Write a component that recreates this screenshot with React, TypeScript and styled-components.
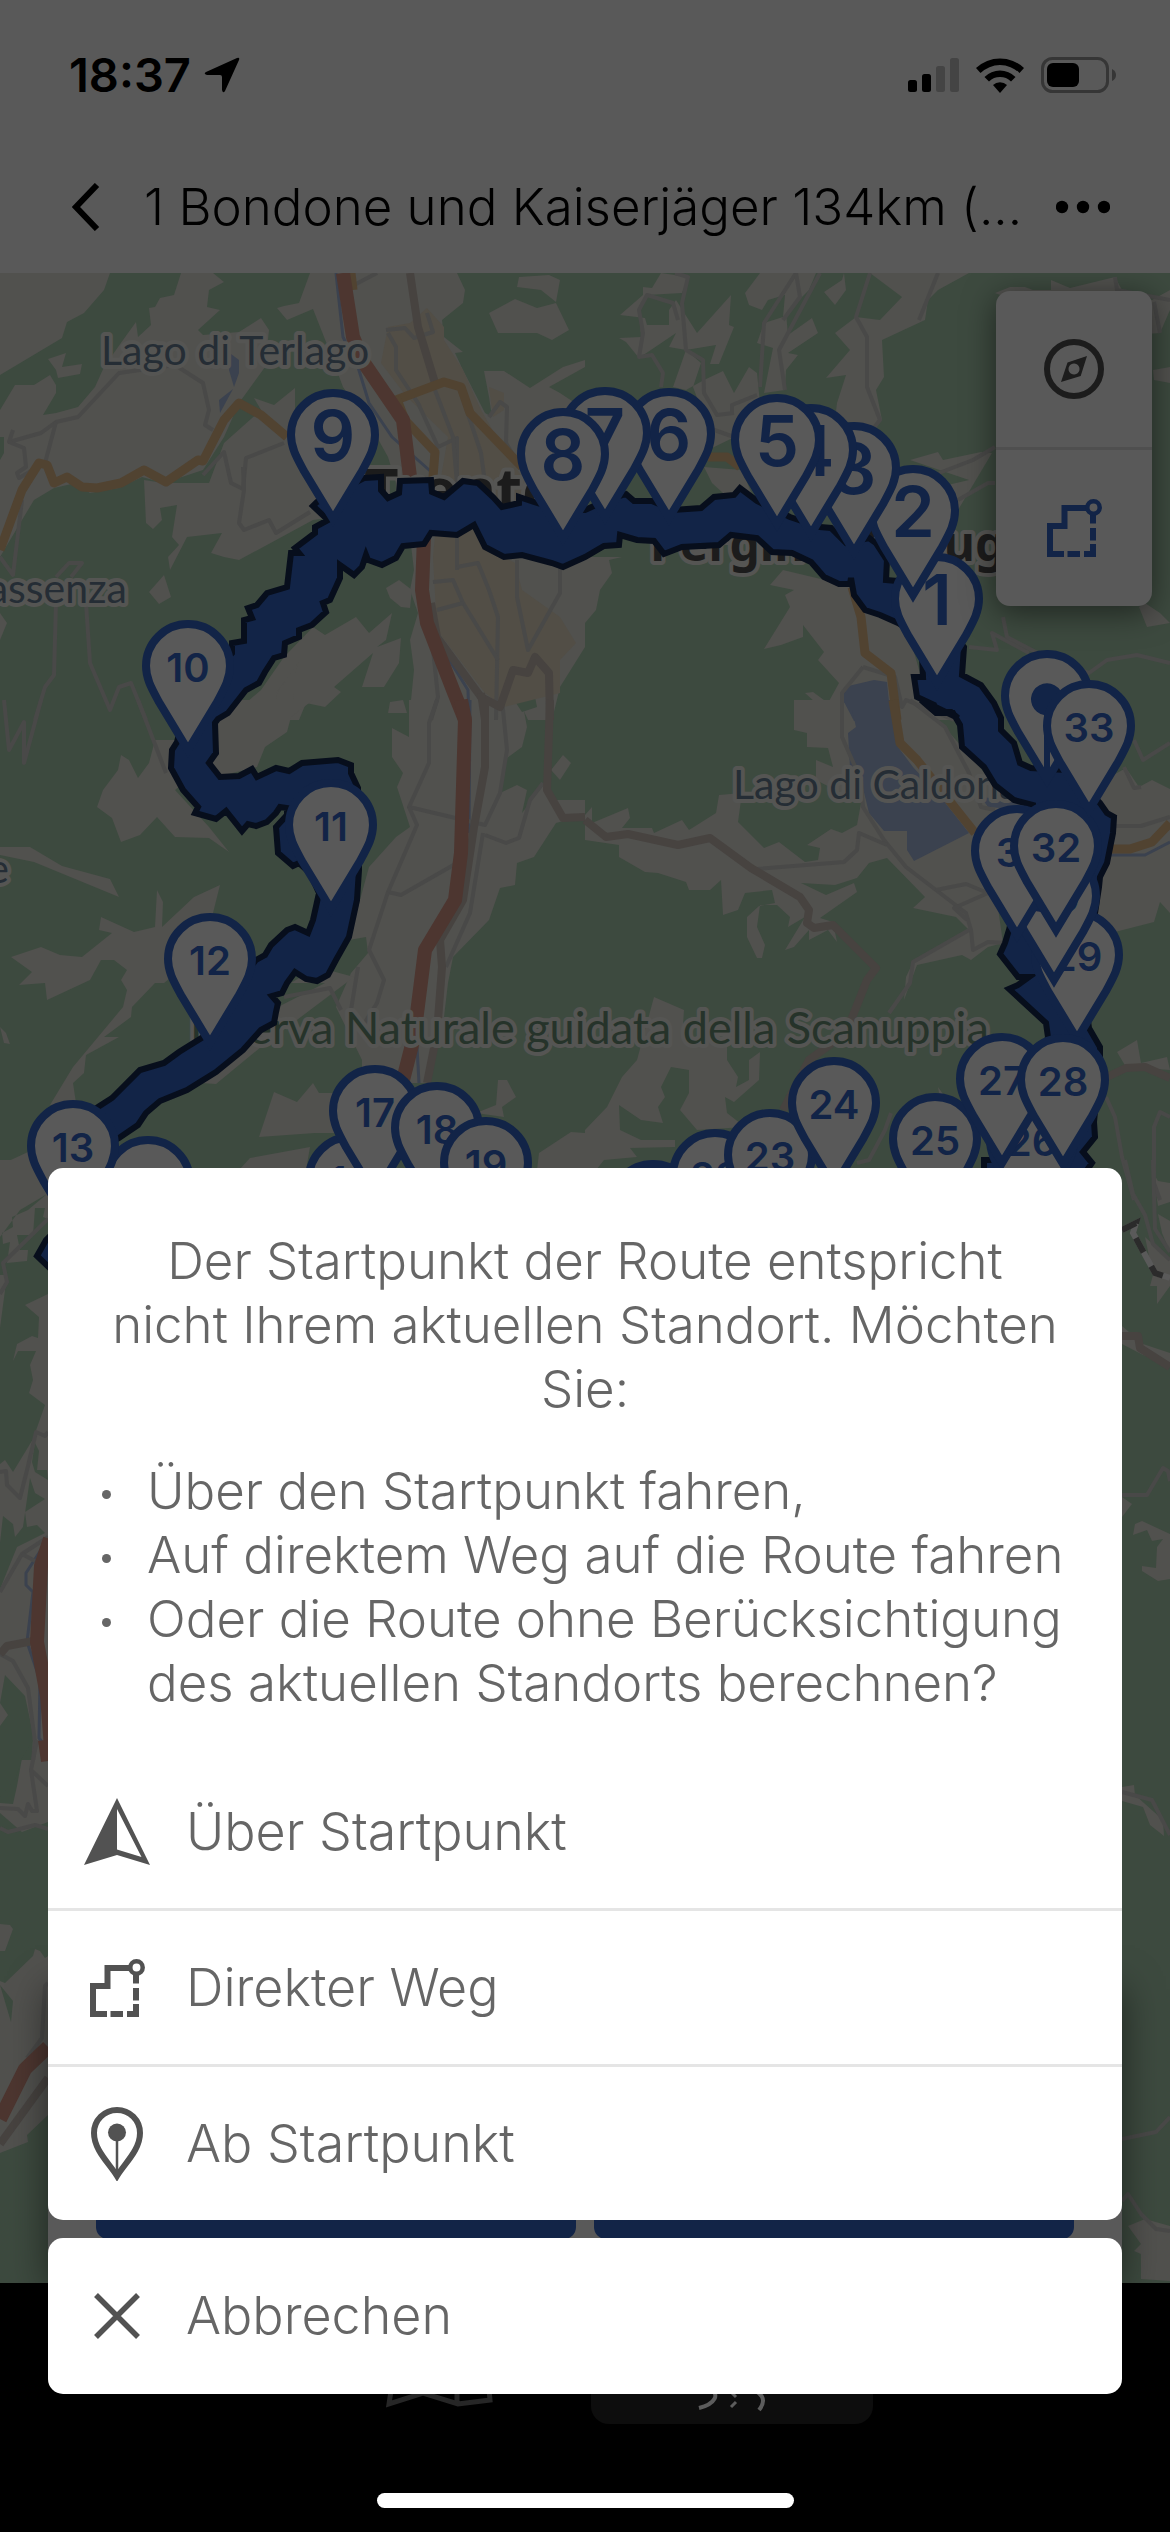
import React from "react";
import styled, { createGlobalStyle } from "styled-components";

const color = {
  chrome: "#595959",
  land: "#51514e",
  forest: "#3d4a3f",
  town: "#524e46",
  water: "#3b424f",
  motorway: "#4d3630",
  primary: "#514331",
  secondary: "#474340",
  minor: "#494948",
  route: "#122447",
  routeEdge: "#070e1c",
  lakeLabel: "#252d35",
  parkLabel: "#26332a",
  cityLabel: "#1c1c1c",
  halo: "#555553",
  text: "#666666",
  icon: "#525252",
  line: "#e5e5e5",
};

const GlobalStyle = createGlobalStyle`
  *, *::before, *::after { box-sizing: border-box; }
  body {
    margin: 0;
    background: #000;
    font-family: Inter, "Liberation Sans", sans-serif;
  }
  button { font: inherit; }
`;

const Screen = styled.div`
  position: relative;
  display: flex;
  flex-direction: column;
  min-height: 100vh;
  overflow: hidden;
`;

const StatusBar = styled.div`
  display: flex;
  align-items: center;
  justify-content: space-between;
  height: 140px;
  padding: 10px 54px 0 69px;
  background: ${color.chrome};
  color: #000;
`;

const Clock = styled.div`
  display: flex;
  align-items: center;
  gap: 13px;
  font-size: 47px;
  line-height: 56px;
  font-weight: 600;
`;

const StatusIcons = styled.div`
  display: flex;
  align-items: center;
  gap: 17px;
`;

const Header = styled.header`
  display: flex;
  align-items: center;
  height: 133px;
  padding: 0 48px 0 60px;
  background: ${color.chrome};
`;

const HeaderButton = styled.button`
  display: flex;
  align-items: center;
  justify-content: center;
  flex: none;
  height: 90px;
  padding: 0 12px;
  border: 0;
  background: none;
  color: #000;
`;

const Title = styled.h1`
  flex: 1;
  min-width: 0;
  margin: 0;
  padding: 0 20px 0 32px;
  overflow: hidden;
  white-space: nowrap;
  font-size: 51px;
  line-height: 64px;
  font-weight: 300;
  color: #000;
`;

const MapArea = styled.main`
  position: relative;
  flex: 1;
  display: flex;
  flex-direction: column;
  justify-content: space-between;
  overflow: hidden;
  background: ${color.forest};
`;

const MapCanvas = styled.svg`
  position: absolute;
  inset: 0;
  width: 100%;
  height: 100%;
`;

const MapControls = styled.div`
  position: relative;
  display: flex;
  flex-direction: column;
  align-self: flex-end;
  width: 156px;
  margin: 18px 18px 0 0;
  border-radius: 14px;
  background: ${color.chrome};
  box-shadow: 0 6px 32px rgba(0, 0, 0, 0.5);
`;

const MapControl = styled.button<{ $tint: string }>`
  display: flex;
  align-items: center;
  justify-content: center;
  height: 156px;
  padding: 0;
  border: 0;
  background: none;
  color: ${(p) => p.$tint};

  & + & {
    height: 159px;
    border-top: 3px solid #4f4f4f;
  }
`;

const RouteCard = styled.div`
  position: relative;
  display: grid;
  grid-template-columns: 1fr 1fr;
  align-items: end;
  gap: 18px;
  height: 300px;
  margin: 0 48px;
  padding: 0 48px 44px;
  background: ${color.chrome};
  box-shadow: 0 6px 36px rgba(0, 0, 0, 0.5);
`;

const CardButton = styled.button`
  height: 126px;
  border: 0;
  border-radius: 12px;
  background: ${color.route};
`;

const TabBar = styled.nav`
  display: flex;
  justify-content: center;
  gap: 12px;
  height: 249px;
  padding-top: 18px;
  background: #000;
`;

const Tab = styled.button<{ $active?: boolean }>`
  display: flex;
  align-items: flex-end;
  justify-content: center;
  width: 282px;
  height: 123px;
  padding: 0 0 ${(p) => (p.$active ? 8 : 16)}px;
  border: 0;
  border-radius: 18px;
  background: ${(p) => (p.$active ? "#0d0d0d" : "none")};
  color: ${(p) => (p.$active ? "#5c5c5c" : "#262626")};
`;

const Overlay = styled.div`
  position: absolute;
  inset: 0;
  display: flex;
  flex-direction: column;
  justify-content: flex-end;
  gap: 18px;
  padding: 0 48px 24px;
`;

const Sheet = styled.section`
  overflow: hidden;
  border-radius: 15px;
  background: #fff;
`;

const Message = styled.div`
  padding: 61px 54px 40px;
  font-size: 51px;
  line-height: 64px;
  font-weight: 300;
  color: ${color.text};
`;

const Question = styled.p`
  margin: 0 0 38px;
  padding: 0 9px;
  text-align: center;
`;

const Options = styled.ul`
  margin: 0;
  padding: 0;
  list-style: none;
`;

const Option = styled.li`
  display: flex;
  gap: 36px;

  &::before {
    content: "";
    flex: none;
    width: 9px;
    height: 9px;
    margin-top: 31px;
    border-radius: 50%;
    background: ${color.text};
  }
`;

const Action = styled.button`
  display: flex;
  align-items: center;
  gap: 36px;
  width: 100%;
  height: 156px;
  padding: 0 36px;
  border: 0;
  background: none;
  text-align: left;
  font-size: 52px;
  line-height: 64px;
  font-weight: 300;
  color: ${color.text};

  &:not(:last-child) {
    border-bottom: 3px solid ${color.line};
  }

  &:last-child:not(:only-child) {
    height: 153px;
  }
`;

const ActionIcon = styled.span`
  display: flex;
  align-items: center;
  justify-content: center;
  flex: none;
  width: 66px;
  color: ${color.icon};
`;

const HomeIndicator = styled.div`
  flex: none;
  align-self: center;
  width: 417px;
  height: 15px;
  margin-top: 81px;
  border-radius: 8px;
  background: #fff;
`;

/* ---------- icons ---------- */

const LocationArrow = () => (
  <svg width="36" height="36" viewBox="0 0 36 36" aria-hidden="true">
    <path d="M33 1 Q36 0 35 3 L21 34 Q19 37 18 33 V20 Q18 18 16 18 H3 Q-1 17 2 15Z" fill="currentColor" />
  </svg>
);

const Signal = () => (
  <svg width="51" height="34" viewBox="0 0 51 34" aria-hidden="true">
    <rect x="0" y="22" width="9" height="12" rx="2.5" />
    <rect x="14" y="16" width="9" height="18" rx="2.5" />
    <rect x="28" y="8" width="9" height="26" rx="2.5" fill="#444" />
    <rect x="42" y="0" width="9" height="34" rx="2.5" fill="#444" />
  </svg>
);

const Wifi = () => (
  <svg width="48" height="36" viewBox="0 0 48 36" aria-hidden="true">
    <path d="M0 11 A35 35 0 0 1 48 11 L43.500 16 A28 28 0 0 0 4.500 16Z" />
    <path d="M8.500 20 A22 22 0 0 1 39.500 20 L35 24.500 A16 16 0 0 0 13 24.500Z" />
    <path d="M17 28 A10 10 0 0 1 31 28 L24 36Z" />
  </svg>
);

const Battery = () => (
  <svg width="75" height="36" viewBox="0 0 75 36" aria-hidden="true">
    <rect x="1.500" y="1.500" width="65" height="33" rx="10" fill="none" stroke="#363636" strokeWidth="3" />
    <rect x="6" y="6" width="32" height="24" rx="6" />
    <path d="M71 12 Q75 14 75 18 T71 24Z" fill="#363636" />
  </svg>
);

const Chevron = () => (
  <svg width="28" height="48" viewBox="0 0 28 48" aria-hidden="true">
    <path d="M25 2 L4 24 L25 46" fill="none" stroke="currentColor" strokeWidth="6" />
  </svg>
);

const Dots = () => (
  <svg width="54" height="14" viewBox="0 0 54 14" aria-hidden="true">
    {[6, 27, 48].map((x) => (
      <circle key={x} cx={x} cy="7" r="6.200" fill="currentColor" />
    ))}
  </svg>
);

const Compass = () => (
  <svg width="60" height="60" viewBox="0 0 60 60" aria-hidden="true">
    <circle cx="30" cy="30" r="27" fill="none" stroke="currentColor" strokeWidth="6" />
    <path
      fillRule="evenodd"
      fill="currentColor"
      d="M43 17 L36.700 37 L17 43 L23.500 23.500Z M30 24.500 a5.500 5.500 0 1 0 0.010 0Z"
    />
  </svg>
);

const RouteIcon = () => (
  <svg width="55" height="58" viewBox="0 0 55 58" fill="none" stroke="currentColor" strokeWidth="6" aria-hidden="true">
    <path d="M39 9 H17.500 V27 H3 V55 H17 M20.500 55 H33 M37 55 H46 V45 M46 41.500 V29 M46 24.500 V16" />
    <circle cx="46.500" cy="8.500" r="6.200" strokeWidth="4.500" />
  </svg>
);

const NavArrow = () => (
  <svg width="66" height="67" viewBox="0 0 66 67" aria-hidden="true">
    <path fillRule="evenodd" fill="currentColor" d="M33 0 L66 67 L33 57 L0 67Z M33 11 V51.500 L57.500 59Z" />
  </svg>
);

const StartPin = () => (
  <svg width="52" height="74" viewBox="0 0 52 74" aria-hidden="true">
    <path
      d="M26 69 C18 56 3 43 3 26 A23 23 0 0 1 49 26 C49 43 34 56 26 69Z"
      fill="none"
      stroke="currentColor"
      strokeWidth="6"
    />
    <circle cx="26" cy="25.500" r="9" fill="currentColor" />
    <path d="M26 30 V66" stroke="currentColor" strokeWidth="2.500" />
  </svg>
);

const Cross = () => (
  <svg width="46" height="46" viewBox="0 0 46 46" aria-hidden="true">
    <path d="M2 2 L44 44 M44 2 L2 44" stroke="currentColor" strokeWidth="5.500" />
  </svg>
);

const FoldedMap = () => (
  <svg width="110" height="84" viewBox="0 0 110 84" fill="none" stroke="currentColor" strokeWidth="5" aria-hidden="true">
    <path d="M6 80 L16 14 L42 4 L74 14 L100 4 L107 76 L75 80 L40 69Z M42 4 L40 69 M74 14 V80" />
  </svg>
);

const Bends = () => (
  <svg width="70" height="84" viewBox="0 0 70 84" fill="none" stroke="currentColor" strokeWidth="4" aria-hidden="true">
    <path d="M2 76 C18 72 24 62 12 56 M50 56 C66 60 70 68 62 78" />
    <path d="M34 60 L39 65 M39 70 L34 75" strokeWidth="3" />
  </svg>
);

/* ---------- map data ---------- */

/* Each survey sheet has its own origin and scale; points are placed on the common grid. */
const sheet = (ox: number, oy: number, sx: number, sy: number) => (points: string) =>
  points
    .trim()
    .split(/\s+/)
    .map((p) => {
      const [x, y] = p.split(",").map(Number);
      return `${Math.round(ox + x / sx)},${Math.round(oy + y / sy)}`;
    })
    .join(" ");

const NW = sheet(0, 270, 2.68, 3);
const NE = sheet(585, 270, 2.68, 3);
const SW = sheet(0, 700, 2.68, 3);
const SE = sheet(585, 700, 2.68, 3);
const W1 = sheet(0, 1160, 3, 2.613);
const W2 = sheet(0, 1740, 3, 2.8);
const E1 = sheet(1100, 1160, 3, 2.613);
const E2 = sheet(585, 1750, 2.68, 2.005);

const openLand = [
  NW("0,10 295,10 280,60 225,130 180,155 165,205 0,315"),
  NW("485,10 570,10 600,35 560,60 555,110 590,120 530,180 545,195 640,185 700,145 720,180 710,290 640,400 600,500 545,600 440,640 380,620 320,655 240,670 205,640 145,655 90,690 60,750 0,860 0,570 12,550 10,500 0,500 0,420 40,345 90,345 135,315 150,345 150,370 115,435 150,430 210,410 255,350 280,290 330,210 365,155 370,200 405,165 400,115 415,110 430,85 465,75"),
  NW("128,268 178,250 165,290 220,283 215,312 155,325 150,300"),
  NW("790,355 735,405 680,385 700,420 600,520 560,640 440,640 385,630 390,760 410,777 435,750 430,715 475,705 460,800 480,825 450,860 455,900 500,800 595,790 565,850 600,860 640,870 840,750 880,745 850,640 790,560"),
  NW("830,10 800,100 760,108 742,115 770,150 840,118 880,230 920,350 1000,480 1040,560 1060,640 1100,800 1110,900 1100,960 1120,1030 1100,1110 1110,1200 1095,1350 1395,1350 1400,1310 1415,1350 1480,1350 1500,1250 1568,1130 1568,450 1540,400 1500,370 1470,350 1568,290 1568,270 1510,290 1420,355 1350,303 1298,303 1310,380 1318,440 1300,430 1240,300 1220,250 1240,245 1190,200 1185,150 1240,100 1245,60 1225,10"),
  NW("1390,20 1470,15 1500,30 1490,95 1450,60 1385,50"),
  NW("1310,130 1380,88 1440,115 1490,100 1525,180 1480,210 1440,190 1335,190"),
  NW("440,915 458,980 425,1003 398,965"),
  NW("1035,955 1070,930 1105,960 1100,1015 1075,1010 1045,985"),
  NW("955,1040 990,1090 1050,1030 1035,1110 1010,1130 1075,1105 1070,1180 1030,1250 970,1250 1000,1150 895,1250 915,1265 870,1310 820,1300 800,1350 605,1350 700,1260 760,1160 840,1070 870,1095"),
  NW("800,1175 790,1210 750,1250 740,1280 765,1335 790,1320 785,1270 740,1270"),
  NW("0,1030 20,1060 0,1110"),
  SW("570,60 640,0 840,0 780,50 770,95 710,140 690,200 580,230 560,150"),
  SW("1040,40 1045,5 1080,0 1090,40"),
  SW("325,165 345,180 370,235 400,190 415,120 470,120 500,240 470,270 560,380 615,455 560,415 470,410 420,350 375,405 325,425 300,355 260,320 275,270 315,210"),
  SW("0,440 80,442 165,498 295,538 318,590 90,485 0,465"),
  SW("420,570 437,605 435,680 520,590 590,555 570,640 600,720 540,760 440,850 415,850 355,920 350,950 280,1010 320,1010 230,1065 225,1120 195,1150 205,1210 135,1215 195,1100 330,920 340,870 325,840 340,810 305,780 270,780 240,840 125,900 120,850 50,855 85,815 30,770 110,740 160,765 220,770 300,700 265,690 270,650 360,695 415,680"),
  SW("1050,85 1095,110 1095,0 1400,0 1412,80 1400,140 1360,175 1340,280 1385,255 1412,270 1400,340 1460,250 1480,300 1568,300 1568,345 1490,370 1430,470 1385,490 1380,555 1340,565 1310,660 1215,770 1200,850 1190,950 1150,1150 970,1150 970,1080 900,920 940,820 985,760 980,712 935,720 990,500 1060,410 1100,380 1065,260 1080,220 1050,170"),
  SW("1510,165 1530,190 1500,240 1478,210"),
  SW("735,1175 795,1205 840,1150 855,1180 900,1180 910,1300 845,1300 695,1310"),
  SW("0,1395 75,1355 130,1500 0,1500"),
  SW("1335,1140 1360,1140 1382,1190 1345,1220 1350,1250 1275,1240 1330,1215"),
  SW("830,1340 820,1410 640,1410 670,1375"),
  SW("1445,1360 1530,1295 1568,1300 1568,1410 1440,1410"),
  SW("745,920 870,850 780,850 850,800 950,830 700,1040 580,1152 540,1150"),
  SW("0,980 15,1000 28,1032 10,1030"),
  NE("0,860 100,862 65,870 72,910 40,960 30,1020 0,1060"),
  NE("205,10 180,55 155,52 155,75 95,135 160,145 165,165 225,165 225,120 245,90 300,190 390,75 385,165 400,170 360,282 335,282 350,225 270,240 235,350 270,360 320,330 370,303 400,370 440,290 460,310 470,400 440,480 330,540 330,470 290,350 310,280 270,240 225,230 245,190 145,265 110,215 90,205 150,200 145,120 165,75 260,70 275,20"),
  NE("470,10 430,70 440,105 475,120 490,90 535,75 530,140 480,160 460,220 505,235 495,280 480,370 535,360 540,300 572,255 545,250 625,190 608,145 545,195 540,130 600,60 620,10"),
  NE("765,10 850,80 790,150 725,140 670,190 710,240 645,325 700,315 675,400 670,450 730,460 770,470 795,450 780,360 800,320 795,210 910,150 920,90 945,60 1028,10"),
  NE("690,30 640,65 670,105 700,60 695,10"),
  NE("870,570 945,545 960,570 1060,545 1090,550 1000,720 950,650 1030,630"),
  NE("1100,70 1140,50 1180,50 1200,60 1250,60 1250,30 1300,55 1420,20 1440,60 1520,90 1568,60 1568,120 1540,190 1400,200"),
  NE("1485,1010 1505,1070 1568,1060 1540,1030 1500,1000"),
  NE("1522,300 1568,290 1568,340 1525,330"),
  NE("495,945 530,900 700,945 720,960 800,1040 860,1060 900,1220 940,1330 1010,1350 560,1350 560,1320 640,1320 590,1270 610,1265 650,1300 680,1240 625,1170 640,1145 585,1065 585,1100 525,1125 480,1137 550,1010 535,975 560,960"),
  NE("320,590 420,600 450,680 370,670 340,640"),
  SE("560,0 900,0 1010,140 1100,255 1180,320 1100,560 1120,730 1080,740 1035,780 1010,765 890,795 855,900 860,830 880,785 1030,690 995,650 880,625 910,590 810,475 760,490 730,535 670,555 580,550 645,585 720,550 728,575 630,655 665,665 675,725 650,690 600,720 600,690 560,740 535,750 590,650 545,680 550,650 515,615 470,615 460,680 482,735 475,775 460,775 435,710 435,650 465,618 510,610 500,570 430,580 410,630 370,645 365,540 335,570 280,570 270,545 195,520 160,515 90,470 90,435 0,420 0,345 20,320 20,370 115,325 120,355 100,385 180,385 185,400 260,360 280,390 350,340 360,285 420,280 410,365 480,445 520,425 590,485 625,480 630,445 595,435 660,388 690,400 730,375 740,310 620,240 620,180 665,200 650,145 595,140 595,100 560,90"),
  SE("1360,260 1450,205 1485,260 1520,240 1568,268 1568,640 1540,605 1525,665 1410,700 1360,650"),
  SE("185,890 265,930 260,1020 380,1010 380,1080 410,1130 405,1160 440,1140 440,1080 470,1055 465,1140 400,1205 375,1190 380,1240 430,1280 300,1290 255,1230 280,1180 280,1110 230,1100 205,1160 215,1190 195,1220 210,1270 150,1260 90,1215 95,1290 150,1320 240,1320 240,1340 120,1345 140,1370 50,1380 30,1410 0,1410 0,1290 60,1220 100,1130 140,1080"),
  SE("1425,1055 1480,1020 1490,1090 1560,1070 1568,1110 1450,1100"),
  SE("945,1160 965,1190 950,1180"),
  W1("0,0 95,0 144,90 144,1568 0,1568"),
  W2("115,0 65,50 50,130 40,180 0,175 0,205 65,257 144,230 144,0"),
  W2("0,515 30,517 38,530 15,592 0,590"),
  W2("105,585 120,590 135,610 144,605 144,1050 80,1105 85,1125 0,1155 0,675 15,680 100,605"),
  E1("155,30 175,55 210,60 210,110 175,120 165,70"),
  E1("175,140 210,160 210,240 185,190"),
  E1("135,200 210,260 210,330 172,375 170,330 150,330 160,300"),
  E1("66,435 130,480 210,505 210,530 130,510 66,480"),
  E1("100,980 105,950 125,943 210,978 210,1095 175,1100 125,1075 125,1060 168,1065 170,1010 190,990 155,995 140,968"),
  E1("66,880 95,900 66,932"),
  E2("1440,75 1470,70 1475,90 1550,140 1552,172 1515,150 1495,115 1440,102"),
  E2("1455,955 1500,940 1568,955 1568,1065 1490,1060 1490,1010 1470,1005 1490,990"),
];

const woods = [
  NW("1380,1270 1410,1255 1435,1280 1440,1310 1400,1325 1382,1300"),
  W1("140,90 85,130 35,150 40,175 5,190 10,220 30,215 20,270 80,265 85,235 60,235 50,195 100,195 105,125 135,125 130,150 144,155 144,350 75,380 117,410 115,465 97,460 50,480 40,525 55,500 108,500 90,535 100,575 88,610 135,640 100,730 40,815 15,785 0,795 0,440 20,300 0,300 0,200 60,130"),
  W1("90,830 105,870 135,885 75,920 80,960 110,955 135,975 75,1000 50,1010 0,1120 0,1000 10,930 40,950 45,985 70,960"),
  W1("105,740 118,760 110,810 140,810 144,835 105,815 95,790"),
  W1("15,1345 75,1400 100,1500 95,1568 0,1568 0,1480 25,1450 0,1420"),
  W2("0,0 100,0 65,50 45,110 0,160"),
  W2("0,685 38,730 33,790"),
];

const towns = [
  NW("1145,115 1190,170 1190,210 1240,300 1290,420 1340,520 1400,620 1430,700 1330,720 1300,830 1380,880 1400,960 1500,1040 1545,1120 1500,1170 1500,1270 1350,1310 1300,1270 1170,1080 1160,860 1180,640 1200,500 1090,380 1020,280 1040,170 1100,160"),
  NW("1310,350 1350,370 1350,420 1320,440"),
];

const lakes = [
  NW("618,252 640,270 641,310 628,352 615,300"),
  NW("588,390 625,358 590,430"),
  NE("695,1250 775,1230 810,1235 820,1352 720,1352 692,1290"),
  SE("690,0 715,30 725,80 705,100 710,200 740,240 760,340 800,392 862,392 862,450 882,483 1030,400 960,300 880,200 840,140 820,0"),
  SE("1060,290 1200,310 1180,330 1080,320"),
];

type Line = { points: string; kind: keyof typeof roadStyle };

const roadStyle = {
  stream: { stroke: color.water, width: 3 },
  minor: { stroke: color.minor, width: 4 },
  secondary: { stroke: color.secondary, width: 8 },
  primary: { stroke: color.primary, width: 9 },
  motorway: { stroke: color.motorway, width: 14 },
};

const lines: Line[] = [
  ...[
    NW("900,10 920,200 960,290 990,400 1050,500 1170,620"),
    NW("1165,1100 1255,1260 1258,1350"),
    SW("1260,0 1258,400"),
    SW("1118,1040 1122,1150"),
    SE("1405,466 1500,466 1568,425"),
    W1("144,990 78,1080 78,1110 98,1130 80,1260 120,1360 118,1510 140,1540"),
  ].map((points) => ({ points, kind: "stream" as const })),
  ...[
    NW("35,480 25,515 110,490 150,455 210,440 320,310 470,285 545,340 560,420 550,465 570,480"),
    NW("25,515 65,535 70,590 45,610 50,625 120,580 150,455"),
    NW("545,615 600,545 620,640 650,658 660,565 760,520"),
    NW("650,590 655,660 640,760 655,780 720,750 740,790 830,725"),
    NW("0,860 35,915 60,690"),
    NW("150,1000 145,1215 120,1250 95,1350"),
    NW("230,1000 240,1180 295,1320 320,1250 350,1240 390,1350"),
    NW("150,920 185,880 220,880 190,920"),
    NW("1035,180 1085,175 1110,205 1160,185 1145,130"),
    NW("1040,190 1060,230 1060,300 1120,400 1175,530 1225,505 1225,900"),
    NW("1165,360 1215,500 1225,640"),
    NW("1230,350 1290,550 1300,640"),
    NW("1310,440 1340,395 1358,410 1355,520 1400,600"),
    NW("1225,890 1280,880 1310,960 1335,1040 1330,1350"),
    NW("1160,935 1215,930 1240,1000 1335,1170"),
    NW("1170,1020 1240,1000"),
    NW("1385,870 1385,980 1415,1140 1500,970 1500,890"),
    NW("1155,1080 1175,1280 1155,1350"),
    NW("950,45 1010,10"),
    SW("1170,0 1150,70 1150,190 1095,320 1300,375 1340,280 1360,150 1345,0"),
    SW("1095,320 1118,375 1040,575 1075,585 1225,490"),
    SW("1040,575 990,750 1030,840 1010,910 970,980"),
    SW("960,800 940,930"),
    SW("1295,400 1260,640 1195,800"),
    SW("1300,405 1355,430 1390,415 1420,300 1455,250"),
    SW("760,890 885,865 915,930"),
    SW("10,0 25,150 65,65 65,190 110,0"),
    SW("370,0 445,220"),
    NE("240,10 275,20 260,100 270,240 315,270 320,370 355,435 400,430"),
    NE("250,150 235,100 165,75 145,120 155,190 145,260 180,255 210,310 205,350"),
    NE("565,10 480,160 470,350"),
    NE("530,150 575,80 565,10"),
    NE("630,10 520,240 535,360"),
    NE("765,10 725,140 755,200 755,350 790,450 770,480"),
    NE("945,10 895,150"),
    NE("325,470 400,500"),
    NE("395,430 395,405 460,375"),
    NE("950,610 1040,570 1100,530"),
    NE("1000,690 1080,640 1100,640"),
    NE("1030,1130 1105,1140 1090,1090 1190,1150"),
    NE("1120,1040 1130,1100 1250,1170 1350,1210 1400,1170 1480,1155 1568,1180"),
    NE("745,1190 690,1270 688,1350"),
    NE("745,1190 830,1220 850,1310 860,1290 990,1350"),
    NE("1420,20 1425,60 1568,90"),
    NE("1525,95 1540,190"),
    SE("688,0 688,110 740,240 745,320 800,420 860,500 940,570 1020,640 1035,690 1040,750 1080,725 1130,730"),
    SE("460,507 695,485 730,450 735,400 810,435"),
    SE("940,570 1020,552 1080,580 990,625 1025,660"),
    SE("870,0 965,80 1030,220 1060,320 1100,330"),
    SE("1030,690 880,785 870,850 815,940"),
    SE("1470,120 1495,180 1568,130"),
    SE("1445,200 1470,265 1490,262"),
    SE("1420,378 1490,378 1568,350"),
    SE("730,1390 760,1380 805,1290 820,1240"),
    SE("1395,1190 1420,1250 1440,1370 1470,1500"),
    SE("1568,1250 1540,1235 1525,1280 1525,1450 1540,1500"),
    W1("144,155 10,270 20,320 0,350"),
    W1("144,710 135,722 108,712 85,800 60,883 20,850 18,812 0,815"),
    W1("144,985 65,1030 0,1130"),
    W1("65,1030 105,1048"),
    W1("0,1290 40,1310 85,1380 105,1520 98,1568"),
    W2("112,0 93,85 144,130"),
    W2("93,85 110,200 95,200 85,180 75,212 55,192 0,190"),
    W2("0,245 25,258 105,238 144,250"),
    W2("144,680 135,690 125,835 80,890"),
    E1("75,0 98,90 135,145 160,220 210,260"),
    E1("160,0 165,180 210,240"),
    E1("66,875 142,875 188,805 204,812 210,840"),
    E2("1440,85 1520,100 1568,170"),
    E2("1440,780 1530,765 1568,735"),
    E2("1440,905 1455,890 1490,930 1530,960 1568,965"),
  ].map((points) => ({ points, kind: "minor" as const })),
  ...[
    NW("1100,10 1120,170 1165,340"),
    NW("1155,1000 1170,1100 1290,1280 1340,1310 1375,1200 1415,1210 1435,1160 1470,1210 1475,1350"),
    NW("1290,1270 1300,1350"),
    SW("1300,0 1300,200 1270,380 1240,600 1180,720 1185,800 1170,1000 1145,1150"),
    SW("1475,0 1465,270 1510,355 1568,350"),
    SE("0,360 55,410 115,402 250,435 335,415 445,505 575,590 600,630 595,670 615,685 665,675 780,805 755,840 700,1000 600,1080 530,1230"),
    SE("1400,1130 1450,1105 1500,1100 1568,1135"),
    W1("0,1290 20,1270 100,1258"),
    W2("0,1130 144,945"),
    E1("66,460 115,460 120,490 210,540"),
  ].map((points) => ({ points, kind: "secondary" as const })),
  ...[
    NW("0,840 60,660 105,580 125,585 145,640 180,620 220,650 260,655 325,640 385,600 445,635 530,570 545,572 600,450 640,400 700,435 770,500"),
    NW("1060,390 1190,335 1235,350 1260,430 1400,590"),
    NW("1060,380 1085,450 1165,545 1160,620"),
    NW("940,10 945,60"),
    NE("330,560 380,560 415,590"),
    NE("715,950 740,1040 750,1150 820,1210 835,1350"),
    SE("825,0 845,130 890,180 1045,400"),
    SE("1405,447 1460,447 1520,425 1568,370"),
  ].map((points) => ({ points, kind: "primary" as const })),
  ...[
    NW("920,10 945,200 975,280 1080,450 1100,620 1137,800 1130,960 1145,1060 1215,1260 1245,1350"),
    SW("1235,0 1247,60 1235,460 1220,600 1140,750 1110,1010 1080,1140"),
    W1("150,990 122,1060 110,1260 140,1400 155,1568"),
    W2("0,1060 75,920 144,860"),
    W2("144,60 135,0"),
  ].map((points) => ({ points, kind: "motorway" as const })),
];

const railway = E1("66,182 108,165 98,190 165,295 210,308");

const routeBand = [
  SW("240,1240 262,1222 300,1195 330,1160 375,1110 440,1088 480,1055 545,1010 600,900 685,780 710,765 725,735 770,690 790,680 825,698 838,660 855,580 830,520 800,490 785,497 745,460 740,380 770,345 768,325 750,322 740,340 715,365 685,378 665,372 648,392 605,332 578,358 522,340 530,320 490,270 458,205 462,150 475,125"),
  NW("500,1300 622,1150 622,1118 655,1112 655,1050 675,1045 665,1015 690,1005 715,968 770,950 780,850 800,850 790,835 845,790 845,770 880,750 838,708 850,695 975,625 1020,620 1022,660 1040,685 1070,670 1072,632 1155,630 1158,665 1190,680 1240,632 1280,640 1320,680 1345,712 1390,700 1392,680 1430,697 1500,720"),
  NE("0,720 60,690 110,672 130,692 180,692 235,720 310,715 345,680 400,675 415,655 460,692 550,740 630,770 660,775 700,820 760,805 780,820 810,870 808,930 835,932 950,1050 1015,1130 1010,1215 1060,1245 1095,1300 1115,1345"),
  SE("1115,90 1150,130 1165,190 1195,205 1290,210 1380,310 1400,340 1418,350 1415,400 1400,490 1380,530 1378,560 1360,700 1340,900 1350,985 1380,1040 1380,1070 1365,1265 1368,1310 1335,1355 1358,1388 1340,1420"),
  SE("1070,1420 1070,1380 1090,1380 1200,1200 1240,1010 1235,970 1135,868 1160,855 1190,832 1160,830 1112,762 1125,730 1135,690 1200,400 1200,315 1150,300 1100,255 1070,200 1010,140 1005,75 985,40 940,38 900,0"),
  NE("1000,1345 980,1325 940,1325 935,1305 890,1280 882,1220 905,1220 900,1100 840,1060 790,1035 750,1020 720,975 712,925 710,942 680,942 640,920 605,875 555,848 500,845 460,805 390,795 360,825 260,830 212,852 185,812 140,810 95,795 90,825 50,828 0,860"),
  NW("1510,890 1480,880 1400,855 1350,860 1300,830 1270,765 1225,795 1155,790 1135,822 1080,828 1060,865 1025,885 985,870 980,855 970,890 950,915 912,885 910,925 885,990 865,1000 875,1025 835,1065 800,1080 800,1100 765,1120 760,1155 735,1165 710,1205 695,1240 660,1260 610,1330 585,1348"),
  SW("575,68 580,160 560,190 590,230 640,228 675,208 690,230 740,205 775,212 810,190 905,180 940,195 940,220 960,265 963,510 958,600 935,710 900,780 880,825 850,842 820,838 790,815 770,850 755,880 730,888 745,910 740,935 735,970 700,990 650,1050 580,1115 500,1170 430,1202 390,1240 370,1275 320,1315 250,1360"),
].join(" ");

type Place = { name: string; x: number; y: number; size: number; fill: string; bold?: boolean; end?: boolean };

const places: Place[] = [
  { name: "Lago di Terlago", x: 101, y: 365, size: 41, fill: color.lakeLabel },
  { name: "assenza", x: 127, y: 603, size: 41, fill: color.lakeLabel, end: true },
  { name: "e", x: 9, y: 883, size: 41, fill: color.lakeLabel, end: true },
  { name: "Lago di Caldonazzo", x: 733, y: 799, size: 41, fill: color.lakeLabel },
  { name: "Riserva Naturale guidata della Scanuppia", x: 190, y: 1044, size: 45, fill: color.parkLabel },
  { name: "Trento", x: 364, y: 511, size: 60, fill: color.cityLabel, bold: true },
  { name: "Pergine Valsugana", x: 650, y: 561, size: 48, fill: color.cityLabel, bold: true },
];

/* Drawn in this order: later pins cover earlier ones. */
const pins: { label: string; x: number; y: number }[] = [
  { label: "1", x: 937, y: 676 },
  { label: "2", x: 913, y: 588 },
  { label: "3", x: 854, y: 545 },
  { label: "4", x: 811, y: 527 },
  { label: "5", x: 777, y: 517 },
  { label: "6", x: 669, y: 511 },
  { label: "7", x: 605, y: 510 },
  { label: "8", x: 563, y: 531 },
  { label: "9", x: 333, y: 512 },
  { label: "10", x: 188, y: 743 },
  { label: "11", x: 331, y: 902 },
  { label: "12", x: 210, y: 1036 },
  { label: "14", x: 148, y: 1259 },
  { label: "13", x: 73, y: 1223 },
  { label: "16", x: 351, y: 1256 },
  { label: "17", x: 375, y: 1188 },
  { label: "18", x: 437, y: 1205 },
  { label: "19", x: 486, y: 1240 },
  { label: "21", x: 653, y: 1283 },
  { label: "22", x: 715, y: 1252 },
  { label: "23", x: 770, y: 1232 },
  { label: "24", x: 834, y: 1180 },
  { label: "25", x: 935, y: 1216 },
  { label: "26", x: 1032, y: 1217 },
  { label: "27", x: 1002, y: 1156 },
  { label: "29", x: 1077, y: 1032 },
  { label: "28", x: 1063, y: 1157 },
  { label: "30", x: 1054, y: 973 },
  { label: "31", x: 1017, y: 928 },
  { label: "32", x: 1056, y: 923 },
  { label: "", x: 1047, y: 773 },
  { label: "33", x: 1089, y: 803 },
];

const PinShape = styled.path`
  fill: ${color.chrome};
  stroke: ${color.route};
  stroke-width: 8px;
`;

const PinLabel = styled.text<{ $wide: boolean }>`
  font-family: Inter, "Liberation Sans", sans-serif;
  font-weight: 600;
  font-size: ${(p) => (p.$wide ? 40 : 70)}px;
  text-anchor: middle;
  fill: ${color.route};
`;

const PlaceLabel = styled.text<{ $size: number; $fill: string; $bold?: boolean; $end?: boolean }>`
  font-family: ${(p) => (p.$bold ? '"Noto Sans", sans-serif' : 'Lato, "Noto Sans", sans-serif')};
  font-size: ${(p) => p.$size}px;
  font-weight: ${(p) => (p.$bold ? 700 : 400)};
  text-anchor: ${(p) => (p.$end ? "end" : "start")};
  fill: ${(p) => p.$fill};
  stroke: ${color.halo};
  stroke-width: 8px;
  stroke-linejoin: round;
  paint-order: stroke;
`;

const RouteMap = () => (
  <MapCanvas viewBox="0 273 1170 2010" preserveAspectRatio="xMidYMin slice" role="img" aria-label="Karte mit Route">
    {openLand.map((p) => (
      <polygon key={p} points={p} fill={color.land} />
    ))}
    {woods.map((p) => (
      <polygon key={p} points={p} fill={color.forest} />
    ))}
    {towns.map((p) => (
      <polygon key={p} points={p} fill={color.town} />
    ))}
    {lakes.map((p) => (
      <polygon key={p} points={p} fill={color.water} />
    ))}
    {lines.map((l) => (
      <polyline
        key={l.points}
        points={l.points}
        fill="none"
        stroke={roadStyle[l.kind].stroke}
        strokeWidth={roadStyle[l.kind].width}
        strokeLinejoin="round"
      />
    ))}
    <polyline points={railway} fill="none" stroke="#5a5a5a" strokeWidth="6" />
    <polyline points={railway} fill="none" stroke="#2b2b2b" strokeWidth="6" strokeDasharray="16 16" />
    {places.map((p) => (
      <PlaceLabel key={p.name} x={p.x} y={p.y} $size={p.size} $fill={p.fill} $bold={p.bold} $end={p.end}>
        {p.name}
      </PlaceLabel>
    ))}
    <polygon points={routeBand} fill={color.route} stroke={color.routeEdge} strokeWidth="6" />
    <polygon points={W1("170,180 138,210 110,250 170,300")} fill={color.route} stroke={color.routeEdge} strokeWidth="6" />
    {pins.map((p) => (
      <g key={p.label} transform={`translate(${p.x} ${p.y})`}>
        <PinShape d="M0 7 L-29 -41 C-36 -54 -42 -64 -42 -77 A42 42 0 0 1 42 -77 C42 -64 36 -54 29 -41Z" />
        {p.label ? (
          <PinLabel y={p.label.length > 1 ? -61 : -51} $wide={p.label.length > 1}>
            {p.label}
          </PinLabel>
        ) : (
          <path d="M-3 0 V-58 A16 16 0 1 1 3 -58 V0Z" fill={color.route} />
        )}
      </g>
    ))}
  </MapCanvas>
);

const actions = [
  { label: "Über Startpunkt", icon: <NavArrow /> },
  { label: "Direkter Weg", icon: <RouteIcon /> },
  { label: "Ab Startpunkt", icon: <StartPin /> },
];

export default function App() {
  return (
    <>
      <GlobalStyle />
      <Screen>
        <StatusBar>
          <Clock>
            <span>18:37</span>
            <LocationArrow />
          </Clock>
          <StatusIcons>
            <Signal />
            <Wifi />
            <Battery />
          </StatusIcons>
        </StatusBar>
        <Header>
          <HeaderButton aria-label="Zurück">
            <Chevron />
          </HeaderButton>
          <Title>1 Bondone und Kaiserjäger 134km (...</Title>
          <HeaderButton aria-label="Mehr">
            <Dots />
          </HeaderButton>
        </Header>
        <MapArea>
          <RouteMap />
          <MapControls>
            <MapControl $tint="#1c1c1c" aria-label="Kompass">
              <Compass />
            </MapControl>
            <MapControl $tint={color.route} aria-label="Route">
              <RouteIcon />
            </MapControl>
          </MapControls>
          <RouteCard>
            <CardButton aria-label="Navigieren" />
            <CardButton aria-label="Bearbeiten" />
          </RouteCard>
        </MapArea>
        <TabBar>
          <Tab aria-label="Karte">
            <FoldedMap />
          </Tab>
          <Tab $active aria-label="Routen">
            <Bends />
          </Tab>
        </TabBar>
        <Overlay role="dialog" aria-modal="true" aria-label="Startpunkt wählen">
          <Sheet>
            <Message>
              <Question>
                Der Startpunkt der Route entspricht nicht Ihrem aktuellen Standort. Möchten Sie:
              </Question>
              <Options>
                <Option>Über den Startpunkt fahren,</Option>
                <Option>Auf direktem Weg auf die Route fahren</Option>
                <Option>Oder die Route ohne Berücksichtigung des aktuellen Standorts berechnen?</Option>
              </Options>
            </Message>
            {actions.map((a) => (
              <Action key={a.label}>
                <ActionIcon>{a.icon}</ActionIcon>
                {a.label}
              </Action>
            ))}
          </Sheet>
          <Sheet>
            <Action>
              <ActionIcon>
                <Cross />
              </ActionIcon>
              Abbrechen
            </Action>
          </Sheet>
          <HomeIndicator />
        </Overlay>
      </Screen>
    </>
  );
}
